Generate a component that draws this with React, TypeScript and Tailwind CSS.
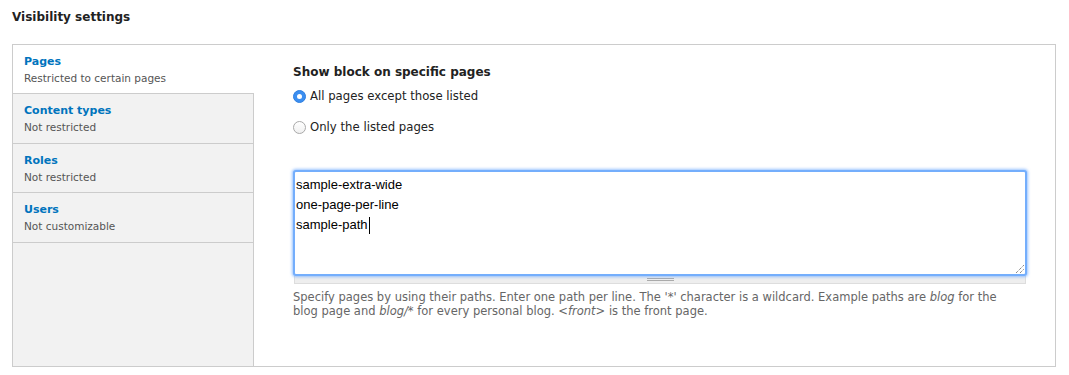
import React from "react";

const font = { fontFamily: '"DejaVu Sans", Verdana, sans-serif' };

function Tab({ title, summary, active, h }: { title: string; summary: string; active?: boolean; h: string }) {
  return (
    <div
      className={
        h + " border-b border-[#cccccc] pl-[11px] pt-[9px] " +
        (active ? "bg-white -mr-px" : "")
      }
    >
      <div className="text-[11px] font-bold leading-[16px] text-[#0074bd]">{title}</div>
      <div className="text-[10.5px] leading-[16px] text-[#555555]">{summary}</div>
    </div>
  );
}

export default function App() {
  return (
    <div className="bg-white w-[1069px] h-[375px] overflow-hidden text-[#222222]" style={font}>
      <div className="pl-[12px] pt-[9px] h-[44px] text-[12px] font-bold leading-[16px] text-[#222222]">
        Visibility settings
      </div>
      <div className="ml-[12px] w-[1044px] h-[323px] border border-[#cccccc] flex">
        <div className="w-[241px] bg-[#f2f2f2] border-r border-[#cccccc] flex flex-col shrink-0 relative z-10">
          <Tab title="Pages" summary="Restricted to certain pages" active h="h-[49px]" />
          <Tab title="Content types" summary="Not restricted" h="h-[50px]" />
          <Tab title="Roles" summary="Not restricted" h="h-[49px]" />
          <Tab title="Users" summary="Not customizable" h="h-[50px]" />
        </div>
        <div className="flex-1 bg-white pl-[39px] pr-[28px] pt-[19px]">
          <div className="text-[12px] font-bold leading-[16px] text-[#222222]">Show block on specific pages</div>
          <div className="mt-[8px] flex items-center h-[16px] gap-[4px]">
            <span className="w-[13px] h-[13px] rounded-full bg-[#3b8ef0] border border-[#2f7fe0] flex items-center justify-center">
              <span className="w-[5px] h-[5px] rounded-full bg-white" />
            </span>
            <span className="text-[11.7px] leading-[16px] text-[#222222]">All pages except those listed</span>
          </div>
          <div className="mt-[15px] flex items-center h-[16px] gap-[4px]">
            <span className="w-[13px] h-[13px] rounded-full border border-[#a9a9a9] bg-gradient-to-b from-white to-[#f0f0f0]" />
            <span className="text-[11.7px] leading-[16px] text-[#222222]">Only the listed pages</span>
          </div>
          <div className="mt-[35px]">
            <div
              className="relative h-[106px] border-2 border-[#74aefc] rounded-[3px] shadow-[0_0_3px_1px_rgba(110,170,255,0.7)] bg-white pl-[1px] pr-[2px] pt-[3px] text-[13px] leading-[20px] text-black"
              style={{ fontFamily: '"Liberation Sans", Arial, sans-serif' }}
            >
              <div>sample-extra-wide</div>
              <div>one-page-per-line</div>
              <div className="flex items-center">
                sample-path<span className="inline-block w-px h-[17px] bg-black ml-px" />
              </div>
              <svg className="absolute right-[1px] bottom-[1px]" width="9" height="9" viewBox="0 0 9 9">
                <line x1="1" y1="9" x2="9" y2="1" stroke="#555" strokeWidth="1" strokeDasharray="1 1" />
                <line x1="5" y1="9" x2="9" y2="5" stroke="#555" strokeWidth="1" strokeDasharray="1 1" />
              </svg>
            </div>
            <div className="h-[8px] bg-[#eeeeee] border border-t-0 border-[#dddddd] mx-[1px] flex justify-center items-center">
              <div className="w-[27px] flex flex-col gap-[1px]">
                <div className="h-px bg-[#aaaaaa]" />
                <div className="h-px bg-[#aaaaaa]" />
              </div>
            </div>
          </div>
          <div className="mt-[6px] max-w-[712px] text-[11.5px] leading-[14px] text-[#666666]">
            Specify pages by using their paths. Enter one path per line. The '*' character is a wildcard. Example paths are <em>blog</em> for the blog page and <em>blog/*</em> for every personal blog. <em>&lt;front&gt;</em> is the front page.
          </div>
        </div>
      </div>
    </div>
  );
}
